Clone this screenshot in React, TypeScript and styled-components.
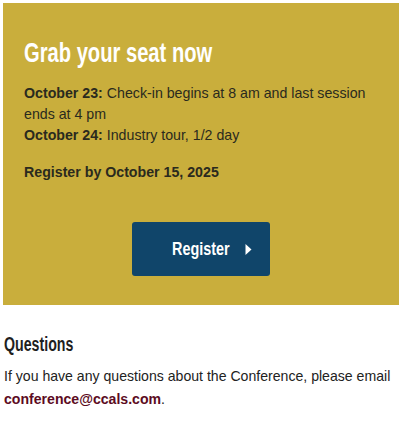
import React from "react";
import styled, { createGlobalStyle } from "styled-components";

const GlobalStyle = createGlobalStyle`
  body {
    margin: 0;
    background: #ffffff;
    font-family: "Liberation Sans", Arial, sans-serif;
    color: #222222;
  }
`;

const Page = styled.div`
  width: 400px;
`;

const Banner = styled.section`
  margin: 3px 1px 0 3px;
  padding: 33px 21px 29px 21px;
  background-color: #c9ae3c;
`;

// narrow display face, squeezed so it sits like the original condensed type
const Heading = styled.h2<{ $light?: boolean }>`
  margin: 0;
  font-family: "Liberation Sans", Arial, sans-serif;
  font-weight: 700;
  font-size: ${(p) => (p.$light ? "28px" : "20px")};
  line-height: ${(p) => (p.$light ? "34px" : "24px")};
  color: ${(p) => (p.$light ? "#ffffff" : "#1f1f1f")};
  span {
    display: inline-block;
    transform: scaleX(${(p) => (p.$light ? 0.72 : 0.71)});
    transform-origin: left center;
    white-space: nowrap;
  }
`;

const Text = styled.p<{ $gap?: number }>`
  margin: ${(p) => p.$gap ?? 13}px 0 0;
  font-size: 14.2px;
  line-height: 21px;
  color: #2a2a1e;
  strong {
    font-weight: 700;
  }
`;

const ButtonRow = styled.div`
  display: flex;
  justify-content: center;
  margin-top: 39px;
`;

const RegisterButton = styled.button`
  display: flex;
  align-items: center;
  gap: 1px;
  width: 138px;
  height: 54px;
  border: none;
  border-radius: 3px;
  background-color: #10456a;
  color: #ffffff;
  font-family: "Liberation Sans", Arial, sans-serif;
  font-weight: 700;
  font-size: 18px;
  cursor: pointer;
  padding: 0 0 0 40px;
  span {
    display: inline-block;
    transform: scaleX(0.8);
    transform-origin: left center;
  }
  svg {
    margin-top: 1px;
  }
`;

const Questions = styled.section`
  padding: 27px 4px 0 4px;
`;

const Body = styled.p`
  margin: 9px 0 0;
  font-size: 14.1px;
  line-height: 23px;
  color: #222222;
`;

const Mail = styled.a`
  color: #5c0b22;
  font-weight: 700;
  text-decoration: none;
`;

export default function App() {
  return (
    <Page>
      <GlobalStyle />
      <Banner>
        <Heading $light>
          <span>Grab your seat now</span>
        </Heading>
        <Text>
          <strong>October 23:</strong> Check-in begins at 8 am and last session ends at 4 pm
          <br />
          <strong>October 24:</strong> Industry tour, 1/2 day
        </Text>
        <Text $gap={16}>
          <strong>Register by October 15, 2025</strong>
        </Text>
        <ButtonRow>
          <RegisterButton type="button">
            <span>Register</span>
            <svg width="7" height="11" viewBox="0 0 7 11">
              <path d="M0.5 0 L6.5 5.5 L0.5 11 Z" fill="#ffffff" />
            </svg>
          </RegisterButton>
        </ButtonRow>
      </Banner>
      <Questions>
        <Heading>
          <span>Questions</span>
        </Heading>
        <Body>
          If you have any questions about the Conference, please email{" "}
          <Mail href="mailto:conference@ccals.com">conference@ccals.com</Mail>.
        </Body>
      </Questions>
    </Page>
  );
}
